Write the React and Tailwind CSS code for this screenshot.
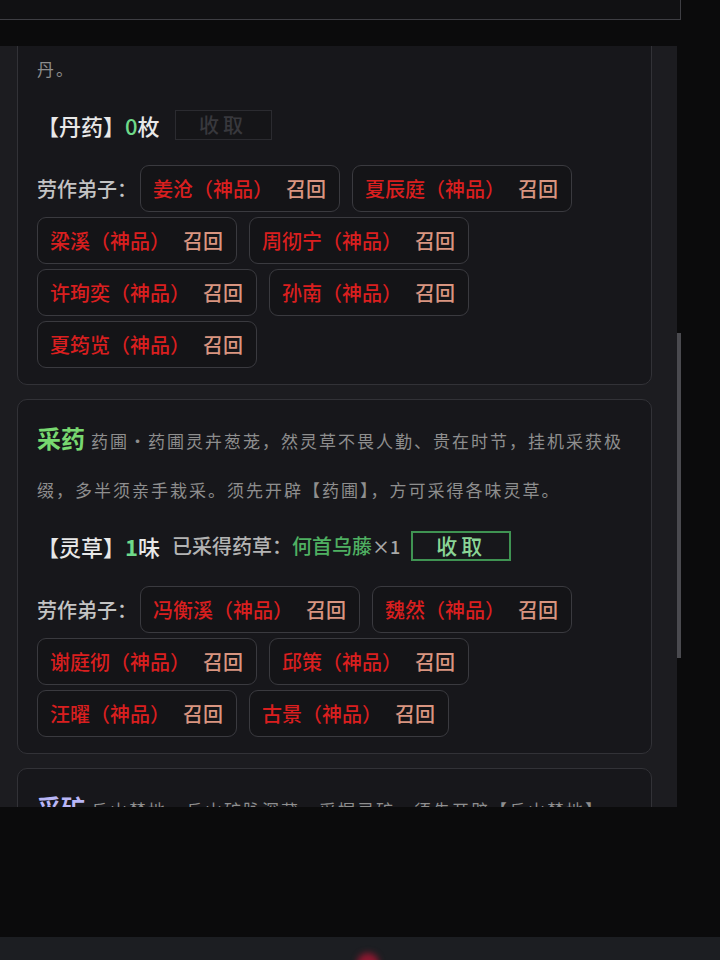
import React from "react";

const FONT = "font-['Noto_Sans_CJK_SC','Noto_Sans',sans-serif]";

function Chip({ name }) {
  return (
    <div className="h-[47px] flex items-center pl-[12px] pr-[13px] mr-3 rounded-[9px] border border-[#3a3a3f] bg-[#141417] text-[20px] leading-none font-medium">
      <span className="text-[#d91f1f]">{name}（神品）</span>
      <span className="ml-[13px] text-[#d99580]">召回</span>
    </div>
  );
}

function Workers({ names }) {
  return (
    <div className="mt-[24px] flex flex-wrap items-center gap-y-[5px]">
      <span className="mr-[3px] text-[20px] leading-none font-medium text-[#c4c4c4]">劳作弟子：</span>
      {names.map((n) => (
        <Chip key={n} name={n} />
      ))}
    </div>
  );
}

function Card({ title, titleColor, desc, children }) {
  return (
    <div className="w-[635px] shrink-0 rounded-[10px] border border-[#323237] bg-[#17171b] px-[19px] pt-[16px] pb-[16px]">
      <p className="text-[17px] leading-[49px]">
        <span className={`text-[24px] leading-none font-bold ${titleColor}`}>{title}</span>
        <span className="ml-[6px] text-[17px] leading-[49px] tracking-[2px] text-[#8e8e8e]">{desc}</span>
      </p>
      {children}
    </div>
  );
}

export default function App() {
  return (
    <div className={`w-[720px] h-[960px] bg-[#0b0b0c] flex flex-col overflow-hidden ${FONT}`}>
      <div className="h-[20px] w-[681px] shrink-0 bg-[#111113] border-b border-r border-[#3e3e43]" />
      <div className="h-[26px] shrink-0" />
      <div className="h-[761px] shrink-0 flex">
        <div className="w-[677px] h-full bg-[#1c1c20] overflow-hidden pl-[17px]">
          <div className="mt-[-68px] flex flex-col gap-[14px]">
            <Card
              title="炼丹"
              titleColor="text-[#e0a35a]"
              desc="丹房·丹房炉火常温，然丹火不宜久候、须有人照，挂机方可炼丹。"
            >
              <div className="mt-[16px] h-[32px] flex items-center font-medium">
                <span className="text-[22px] leading-none text-[#e8e8e8]">【丹药】</span>
                <span className="text-[22px] leading-none text-[#6ed98a]">0</span>
                <span className="text-[22px] leading-none text-[#e8e8e8]">枚</span>
                <div className="ml-[15px] w-[97px] h-[30px] flex items-center justify-center border border-[#2b2b30] bg-[#151518] text-[20px] tracking-[4px] text-[#38383d]">
                  收取
                </div>
              </div>
              <Workers names={["姜沧", "夏辰庭", "梁溪", "周彻宁", "许珣奕", "孙南", "夏筠览"]} />
            </Card>
            <Card
              title="采药"
              titleColor="text-[#78d870]"
              desc="药圃·药圃灵卉葱茏，然灵草不畏人勤、贵在时节，挂机采获极缀，多半须亲手栽采。须先开辟【药圃】，方可采得各味灵草。"
            >
              <div className="mt-[16px] h-[32px] flex items-center font-medium">
                <span className="text-[22px] leading-none text-[#e8e8e8]">【灵草】</span>
                <span className="text-[22px] leading-none font-bold text-[#6ed98a]">1</span>
                <span className="text-[22px] leading-none text-[#e8e8e8]">味</span>
                <span className="ml-3 text-[20px] leading-none text-[#b4b4b4]">已采得药草：</span>
                <span className="text-[20px] leading-none text-[#4fb062]">何首乌藤</span>
                <span className="text-[18px] leading-none text-[#a8a8a8]">×1</span>
                <div className="ml-[11px] w-[100px] h-[30px] flex items-center justify-center border-2 border-[#3f9352] text-[21px] tracking-[4px] text-[#8ad596]">
                  收取
                </div>
              </div>
              <Workers names={["冯衡溪", "魏然", "谢庭彻", "邱策", "汪曜", "古景"]} />
            </Card>
            <Card
              title="采矿"
              titleColor="text-[#b9b6f6]"
              desc="丘山禁地·丘山矿脉深藏，采掘灵矿，须先开辟【丘山禁地】，方可采得各色灵矿。"
            >
              <div className="h-[200px]" />
            </Card>
          </div>
        </div>
        <div className="w-[5px] h-full flex flex-col">
          <div className="mt-[287px] h-[325px] w-[4px] bg-[#4a4a4f]" />
        </div>
      </div>
      <div className="flex-1" />
      <div className="h-[23px] shrink-0 bg-[#1c1e22] relative overflow-hidden">
        <div className="absolute left-[357px] top-[16px] w-[22px] h-[22px] rounded-full bg-[#8e1830] blur-[3px]" />
      </div>
    </div>
  );
}
